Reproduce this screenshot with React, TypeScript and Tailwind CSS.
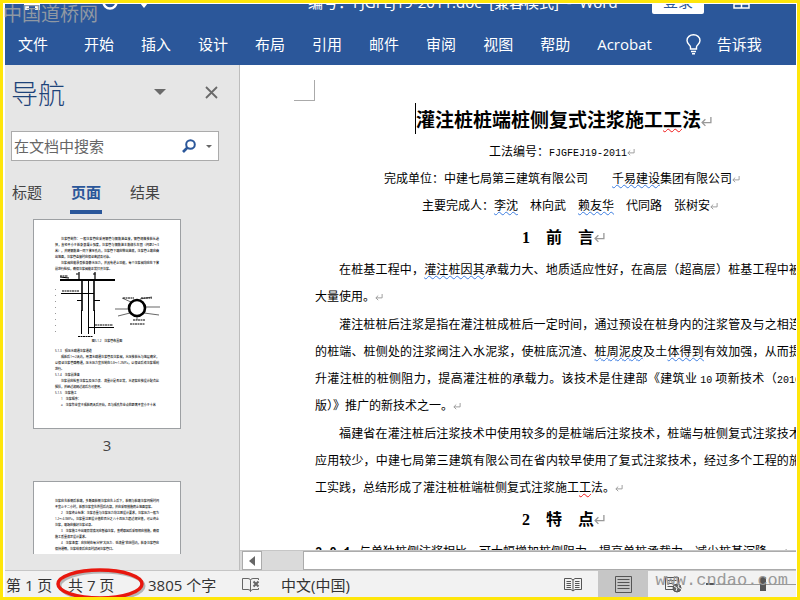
import type { ReactNode } from 'react';

const tabs = ['开始', '插入', '设计', '布局', '引用', '邮件', '审阅', '视图', '帮助', 'Acrobat'];

function Return({ big = false }: { big?: boolean }) {
  return (
    <span aria-hidden="true" className="inline-block w-0 overflow-visible indent-0 leading-none whitespace-nowrap">
      <svg
        viewBox="0 0 10 9"
        className={big ? 'inline-block h-[10px] w-[11px] max-w-none align-baseline' : 'inline-block h-[7px] w-2 max-w-none align-baseline'}
        fill="none"
        stroke="#999"
        strokeWidth="1.2"
      >
        <path d="M9 0V5H1M4 2L1 5L4 8" />
      </svg>
    </span>
  );
}

function Blue({ children }: { children: ReactNode }) {
  return <span className="underline decoration-[#3c7de0] decoration-wavy decoration-1 underline-offset-1">{children}</span>;
}

function Red({ children }: { children: ReactNode }) {
  return <span className="underline decoration-[#f01818] decoration-wavy decoration-1 underline-offset-1">{children}</span>;
}

function Latin({ children }: { children: ReactNode }) {
  return <span className="font-['Liberation_Mono','Noto_Sans_CJK_SC',monospace] text-[10px] leading-none">{children}</span>;
}

function TitleBar() {
  return (
    <div className="h-[22px] overflow-hidden">
      <div className="-mt-3.5 flex h-6 items-center text-[15px] text-white">
        <svg viewBox="0 0 16 16" className="ml-[19px] h-4 w-4" fill="#fff">
          <path d="M0 0H16V16H11V11H5V16H0Z" />
        </svg>
        <svg viewBox="0 0 16 16" className="ml-[62px] h-4 w-4" fill="none" stroke="#fff" strokeWidth="2.5">
          <circle cx="8" cy="8" r="6.5" />
        </svg>
        <svg viewBox="0 0 8 5" className="mt-1.5 ml-[22px] h-[5px] w-2" fill="#fff">
          <path d="M0 0H8L4 5Z" />
        </svg>
        <h1 className="ml-[160px] flex-1 whitespace-pre">编号：FJGFEJ19-2011.doc  [兼容模式]  -  Word</h1>
        <button className="h-6 w-[52px] rounded-b-[2px] bg-white pb-1 text-[15px] text-[#2b579a]">登录</button>
        <svg viewBox="0 0 17 14" className="mr-[46px] ml-[29px] h-3.5 w-[17px]" fill="none" stroke="#fff" strokeWidth="1.5">
          <path d="M1 1H16V13H1ZM1 9H16M8.500 4V13" />
        </svg>
      </div>
    </div>
  );
}

function Ribbon() {
  return (
    <nav className="flex h-[39px] items-center pb-0.5 pl-[13px] text-[15px] whitespace-nowrap text-white">
      <button className="mr-9">文件</button>
      <div className="flex gap-[27px]">
        {tabs.map((t) => (
          <button key={t}>{t}</button>
        ))}
      </div>
      <button className="ml-[34px] flex items-center gap-4">
        <svg viewBox="0 0 15 21" className="h-[21px] w-[15px]" fill="none" stroke="#fff" strokeWidth="1.4">
          <path d="M4.500 15V13C4.500 11 1 10 1 6.500C1 3 4 .8 7.500 .8S14 3 14 6.500C14 10 10.500 11 10.500 13V15ZM5 17.500H10M6 19.800H9" />
        </svg>
        告诉我
      </button>
    </nav>
  );
}

function Thumb({ children }: { children: ReactNode }) {
  return (
    <div className="h-[210px] w-[148px] shrink-0 overflow-hidden border border-[#9da0a3] bg-white px-[21px] pt-4 text-justify text-[3px] leading-[6px] font-medium text-black">
      {children}
    </div>
  );
}

function PileDrawing() {
  return (
    <svg viewBox="0 0 110 66" className="block h-[66px] w-[110px]" fill="none" stroke="#000">
      <path d="M5 8H60" strokeWidth="2" />
      <path d="M5 5L14 6M24 0V8M40 0V8" strokeWidth="1.2" />
      <path d="M27 8V39M39 8V39" strokeWidth="1.6" />
      <path d="M26.500 38V62M33.500 7V62M39.500 38V62" strokeWidth="1" />
      <path d="M6 21.500H39M34 55.500H59M22 28.500H27M39 28.500H45" />
      <circle cx="82" cy="36" r="8" strokeWidth="2.600" />
      <path d="M67 26L76 30M85 27L97 25M60 37H73M91 35H105M63 44L75 41M89 41L104 43M82 45V48" strokeWidth=".6" />
      <path d="M7 19H24M40 53H58M68 26H79M86 26H97M78 48H90M75 52H90M5 4H13M21 2H24M38 2H41" strokeDasharray="2 .5" strokeWidth="1.200" />
      <path d="M.5 17v1M.5 23v1M.5 29v1M.5 35v1M.5 41v1M.5 47v1M.5 53v1M.5 59v1" stroke="#999" />
      <path d="M23 64.500H38" strokeDasharray="2 .5" />
    </svg>
  );
}

function Navigation() {
  return (
    <aside className="flex w-[235px] shrink-0 flex-col border-r border-[#bdbdbd] bg-[#e6e6e6] pb-4 pl-1.5">
      <div className="flex h-[66px] items-center text-[#666]">
        <h2 className="flex-1 pb-2 text-[27px] leading-10 font-light text-[#1e4379]">导航</h2>
        <button aria-label="选项" className="pb-3">
          <svg viewBox="0 0 12 6" className="h-1.5 w-3" fill="#6a6a6a"><path d="M0 0H12L6 6Z" /></svg>
        </button>
        <button aria-label="关闭" className="mr-[21px] ml-[39px] pb-3">
          <svg viewBox="0 0 13 13" className="h-[13px] w-[13px]" stroke="#6a6a6a" strokeWidth="1.8"><path d="M1 1L12 12M12 1L1 12" /></svg>
        </button>
      </div>
      <div className="mr-5 flex h-[30px] items-center border border-[#ababab] bg-white pl-0.5">
        <input
          aria-label="在文档中搜索"
          placeholder="在文档中搜索"
          className="min-w-0 flex-1 bg-transparent text-[15px] outline-none placeholder:text-[#666]"
        />
        <svg viewBox="0 0 14 14" className="h-3.5 w-3.5" fill="none" stroke="#2b579a" strokeWidth="2">
          <circle cx="8.500" cy="5.500" r="4.300" />
          <path d="M5.500 8.500L1 13" strokeWidth="2.600" />
        </svg>
        <svg viewBox="0 0 6 3" className="mr-1.5 ml-2.5 h-[3px] w-1.5" fill="#666"><path d="M0 0H6L3 3Z" /></svg>
      </div>
      <div className="mt-4 flex h-[37px] gap-[28px] pl-px text-[15px] leading-[30px] text-[#444]">
        <button className="self-start">标题</button>
        <button className="flex h-[37px] w-8 items-start justify-center border-b-4 border-[#2b579a] font-bold text-[#2b579a]">页面</button>
        <button className="self-start">结果</button>
      </div>
      <div className="mt-[5px] flex min-h-0 flex-1 flex-col overflow-hidden pl-[22px]">
        <Thumb>
          <p className="indent-[6px]">注浆管制作：一般注浆管应采用钢管与钢筋笼连接，钢管规格按桩长选择，直径不小于桩身混凝土强度，注浆管与钢筋笼主筋绑扎牢固（间距2～3米），并随钢筋笼一同下放至孔内，注浆管下端应伸出笼底，注浆管上端应高出地面，注浆管连接时应保证密封及可靠。</p>
          <p className="indent-[6px]">注浆阀应能承受桩身静水压力，并具有逆止功能，每个注浆阀均应在下放前进行检验，确保注浆阀能正常打开注浆。</p>
          <PileDrawing />
          <p className="mb-1 text-center">图5.1.2　注浆管布置图</p>
          <p>5.1.3　预压水疏通注浆通道</p>
          <p className="indent-[6px]">成桩后1～2天内，用清水疏通注浆管及注浆阀，水压按桩长与地层确定，以保证注浆管路畅通，压水压力宜控制在0.8～1.2MPa，以保证后续注浆顺利进行。</p>
          <p>5.1.4　注浆前准备</p>
          <p className="indent-[6px]">注浆前应检查注浆泵及压力表、流量计是否正常，水泥浆应按设计配合比搅拌，并经过滤网过滤后方可使用。</p>
          <p>5.1.5　注浆施工</p>
          <p className="indent-[6px]">1　注浆顺序：</p>
          <p className="indent-[6px]">a　注浆作业宜于成桩两天后开始，且与成孔作业点的距离不宜小于十米</p>
        </Thumb>
        <p className="w-[148px] py-1 text-center text-[15px] leading-6 text-[#444]">3</p>
        <div className="mt-5">
          <Thumb>
            <p>注浆应先桩侧后桩端，多断面桩侧注浆应先上后下，桩侧与桩端注浆间隔时间不宜少于二小时，桩群注浆宜先外围后内部，并应采取措施防止地面冒浆。</p>
            <p className="indent-[6px]">2　注浆终止标准：注浆总量与注浆压力均达到设计要求，注浆压力一般为1.2～4.0MPa，注浆量达到设计值的百分之八十且压力超过规定值，可以终止注浆，现场应做好注浆记录。</p>
            <p className="indent-[6px]">3　注浆施工中出现异常情况应暂停注浆，查明原因后采取相应措施，确保施工质量满足设计要求。</p>
            <p className="indent-[6px]">4　注浆速度：应控制在每分钟“大压力、低流量”的范围内，桩身注浆管应保持通畅，注浆结束后应及时封闭注浆管口。</p>
          </Thumb>
        </div>
      </div>
    </aside>
  );
}

function Document() {
  return (
    <article className="min-h-0 flex-1 overflow-hidden bg-white text-[12px] leading-[27px] text-black">
      <div className="mt-[15px] ml-[54px] h-[21px] w-[21px] border-r border-b border-[#aaa]" />
      <div className="ml-[75px] w-[486px]">
        <h2 className="text-center text-[19px] leading-9 font-bold">
          <span className="border-l border-black py-0.5">灌注桩桩端桩侧复式注浆施</span>工<Red>工</Red>法<Return big />
        </h2>
        <p className="text-center">工法编号：<Latin>FJGFEJ19-2011</Latin><Return /></p>
        <p className="text-center">完成单位：中建七局第三建筑有限公司　　<Blue>千易建设</Blue>集团有限公司<Return /></p>
        <p className="pl-4 text-center">主要完成人：<Blue>李沈</Blue>　林向武　<Blue>赖友华</Blue>　代同路　张树安<Return /></p>
        <h3 className="text-center text-[16px] leading-[37px] font-bold"><span className="font-['Liberation_Serif',serif] leading-none">1</span>　前　言<Return big /></h3>
        <div className="flex flex-col gap-px text-justify indent-6">
          <p>在桩基工程中，<Blue>灌注桩因其</Blue>承载力大、地质适应性好，在高层（超高层）桩基工程中被大量使用。<Return /></p>
          <p>灌注桩桩后注浆是指在灌注桩成桩后一定时间，通过预设在桩身内的注浆管及与之相连的桩端、桩侧处的注浆阀注入水泥浆，使桩底沉渣、<Blue>桩周泥皮</Blue>及土<Blue>体得到</Blue>有效加强，从而提升灌注桩的桩侧阻力，提高灌注桩的承载力。该技术是住建部《建筑业 <Latin>10</Latin> 项新技术（<Latin>2010</Latin>版）》推广的新技术之一。<Return /></p>
          <p>福建省在灌注桩后注浆技术中使用较多的是桩端后注浆技术，桩端与桩侧复式注浆技术应用较少，中建七局第三建筑有限公司在省内较早使用了复式注浆技术，经过多个工程的施工实践，总结形成了灌注桩桩端桩侧复式注浆施工<Red>工</Red>法。<Return /></p>
        </div>
        <h3 className="text-center text-[16px] leading-[37px] font-bold"><span className="font-['Liberation_Serif',serif] leading-none">2</span>　特　点<Return big /></h3>
        <p className="whitespace-nowrap"><b className="mr-2 font-['Liberation_Mono',monospace] leading-none">2.0.1</b>与单独桩侧注浆相比，可大幅增加桩侧阻力，提高单桩承载力，减少桩基沉降。<Return /></p>
      </div>
    </article>
  );
}

function ScrollBar() {
  return (
    <div className="flex h-5 shrink-0 border-t border-[#c6c6c6] bg-[#dadada] pl-0.5">
      <button aria-label="向左滚动" className="flex w-5 items-center justify-center border border-[#ababab] bg-white">
        <svg viewBox="0 0 6 10" className="h-2.5 w-1.5" fill="#666"><path d="M6 0V10L0 5Z" /></svg>
      </button>
      <div className="ml-[41px] flex-1 border border-r-0 border-[#ababab] bg-white" />
    </div>
  );
}

function StatusBar() {
  return (
    <footer className="flex h-[27px] shrink-0 items-stretch border-t border-[#c6c6c6] bg-[#f2f2f2] pl-px text-[15px] leading-7 whitespace-nowrap text-[#333]">
      <span className="w-[62px]">第 1 页</span>
      <span className="relative w-20">
        共 7 页
        <svg viewBox="0 0 96 38" className="absolute -top-[5px] -left-[14px] h-[38px] w-24 max-w-none" fill="none">
          <ellipse cx="48" cy="20" rx="42" ry="14" stroke="#777" strokeOpacity=".5" strokeWidth="3" />
          <ellipse cx="46" cy="18" rx="42" ry="14" stroke="#e8170e" strokeWidth="3.500" />
        </svg>
      </span>
      <span className="w-[94px]">3805 个字</span>
      <svg viewBox="0 0 18 16" className="mt-1.5 h-4 w-[18px]" fill="none" stroke="#666">
        <path d="M.5 1.500H6Q8.500 1.500 8.500 3.500V14.500Q8.500 12.500 6 12.500H.5ZM8.500 3.500Q8.500 1.500 11 1.500H16.500V3M8.500 14.500Q9 12.500 11 12.500H16.500V11" />
        <path d="M11.500 4.500L16.500 9.500M16.500 4.500L11.500 9.500" strokeWidth="2" />
      </svg>
      <span className="ml-[21px] flex-1">中文(中国)</span>
      <button aria-label="阅读视图" className="w-[50px]">
        <svg viewBox="0 0 18 15" className="mx-auto h-[15px] w-[18px]" fill="none" stroke="#555">
          <path d="M.5 1.500H7L9 3L11 1.500H17.500V12.500H11L9 14L7 12.500H.5ZM9 3V14M2.500 4.500H7M2.500 6.500H7M2.500 8.500H7M2.500 10.500H7M11 4.500H15.500M11 6.500H15.500M11 8.500H15.500M11 10.500H15.500" />
        </svg>
      </button>
      <button aria-label="页面视图" className="w-[50px] bg-[#c6c6c6]">
        <svg viewBox="0 0 17 17" className="mx-auto h-[17px] w-[17px]" fill="none" stroke="#555">
          <path d="M.5 .5H16.500V16.500H.5ZM2.500 3.500H14.500M2.500 6.500H14.500M2.500 9.500H14.500M2.500 12.500H14.500" />
        </svg>
      </button>
      <button aria-label="Web 视图" className="w-[50px]">
        <svg viewBox="0 0 17 17" className="mx-auto h-[17px] w-[17px]" fill="none" stroke="#555">
          <path d="M9 13.500H.5V1.500H13.500V7M2.500 4.500H11.500M2.500 7.500H9M2.500 10.500H8" />
          <circle cx="12" cy="12" r="4" fill="#666" />
          <path d="M9 10L12 12L11 15M14 9L13 11L16 13" stroke="#f2f2f2" />
        </svg>
      </button>
      <button aria-label="缩小" className="ml-2 flex w-2 items-center"><span className="h-0.5 w-2 bg-[#555]" /></button>
      <label className="relative ml-0.5 flex w-[80px] items-center">
        <input
          type="range"
          aria-label="显示比例"
          defaultValue={60}
          className="h-4 w-full appearance-none bg-[linear-gradient(#999,#999)] bg-[length:100%_1px] bg-center bg-no-repeat [&::-webkit-slider-thumb]:h-3.5 [&::-webkit-slider-thumb]:w-1.5 [&::-webkit-slider-thumb]:appearance-none [&::-webkit-slider-thumb]:bg-[#555]"
        />
      </label>
    </footer>
  );
}

export default function App() {
  return (
    <div className="relative flex h-screen w-full flex-col overflow-hidden border-3 border-[#ffe60a] bg-white pt-px pr-px pl-0.5 font-['Open_Sans','Noto_Sans_CJK_SC',sans-serif]">
      <header className="shrink-0 bg-[#2b579a]">
        <TitleBar />
        <Ribbon />
      </header>
      <main className="flex min-h-0 flex-1">
        <Navigation />
        <section className="flex min-w-0 flex-1 flex-col font-['Noto_Sans_CJK_SC',sans-serif]">
          <Document />
          <ScrollBar />
        </section>
      </main>
      <StatusBar />
      <div className="pointer-events-none absolute top-0 left-0 font-['Noto_Sans_CJK_SC',sans-serif] text-[19px] leading-5 text-[#8f98a3]">中国道桥网</div>
      <div className="pointer-events-none absolute right-[9px] bottom-1 font-['Liberation_Mono',monospace] text-[17px] leading-6 text-[#999]">www.cndao.com</div>
    </div>
  );
}
